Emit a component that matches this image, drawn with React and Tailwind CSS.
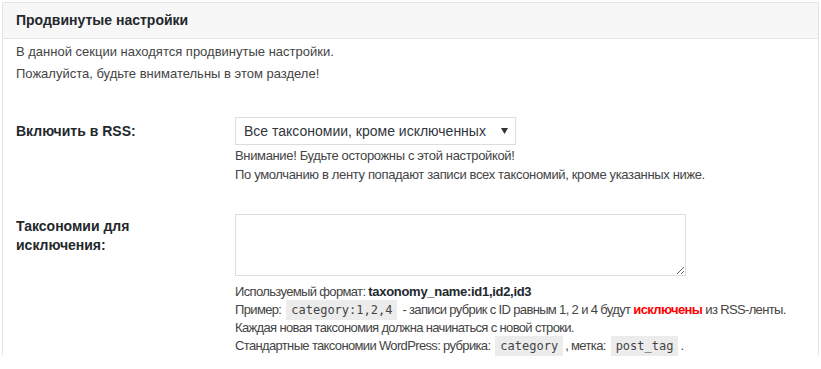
import React from 'react';

const Code = ({ children }) => (
  <code className="bg-[#ececec] px-[5px] py-[3px] mx-[2px] text-[12px] tracking-[0px] text-[#444] font-['DejaVu_Sans_Mono',monospace]">
    {children}
  </code>
);

const App = () => {
  return (
    <div className="min-h-[369px] bg-white pt-[2px] px-[2px] font-['Liberation_Sans',Arial,sans-serif] text-[#444]">
      <div className="border border-[#e5e5e5] border-b-0">
        {/* Header */}
        <div className="h-[36px] bg-[#f7f7f7] border-b border-[#e5e5e5] px-[13px] flex items-center">
          <h2 className="text-[14px] font-bold text-[#23282d]">Продвинутые настройки</h2>
        </div>

        <div className="px-[13px] pt-[2px]">
          <p className="text-[13px] leading-[22px]">
            В данной секции находятся продвинутые настройки.
            <br />
            Пожалуйста, будьте внимательны в этом разделе!
          </p>

          {/* Row: RSS */}
          <div className="grid grid-cols-[219px_1fr] mt-[18px]">
            <div className="pt-[18px] text-[14px] leading-[20px] font-bold text-[#23282d]">Включить в RSS:</div>
            <div className="pt-[14px] pb-[16px]">
              <div className="w-[281px] h-[28px] border border-[#dddddd] flex items-center justify-between pl-[8px] pr-[7px] text-[14px] text-[#32373c]">
                <span>Все таксономии, кроме исключенных</span>
                <svg width="7" height="6" viewBox="0 0 7 6">
                  <path d="M0 0 L7 0 L3.5 6 Z" fill="#333" />
                </svg>
              </div>
              <p className="text-[13px] leading-[19px] tracking-[-0.35px] mt-[1px]">
                Внимание! Будьте осторожны с этой настройкой!
                <br />
                По умолчанию в ленту попадают записи всех таксономий, кроме указанных ниже.
              </p>
            </div>
          </div>

          {/* Row: taxonomies */}
          <div className="grid grid-cols-[219px_1fr]">
            <div className="pt-[17px] text-[14px] leading-[19px] font-bold text-[#23282d] w-[150px]">
              Таксономии для исключения:
            </div>
            <div className="pt-[14px]">
              <textarea className="block w-[451px] h-[62px] border border-[#dddddd] outline-none" />
              <div className="mt-[7px] text-[13px] leading-[18px] tracking-[-0.65px]">
                <div>
                  Используемый формат:{' '}
                  <b className="text-[#23282d] tracking-[-0.3px]">taxonomy_name:id1,id2,id3</b>
                </div>
                <div>
                  Пример: <Code>category:1,2,4</Code> - записи рубрик с ID равным 1, 2 и 4 будут{' '}
                  <b className="text-[#ff0000] tracking-[-0.6px]">исключены</b> из RSS-ленты.
                </div>
                <div>Каждая новая таксономия должна начинаться с новой строки.</div>
                <div>
                  Стандартные таксономии WordPress: рубрика: <Code>category</Code>, метка: <Code>post_tag</Code>.
                </div>
              </div>
            </div>
          </div>
        </div>
      </div>
    </div>
  );
};

export default App;
